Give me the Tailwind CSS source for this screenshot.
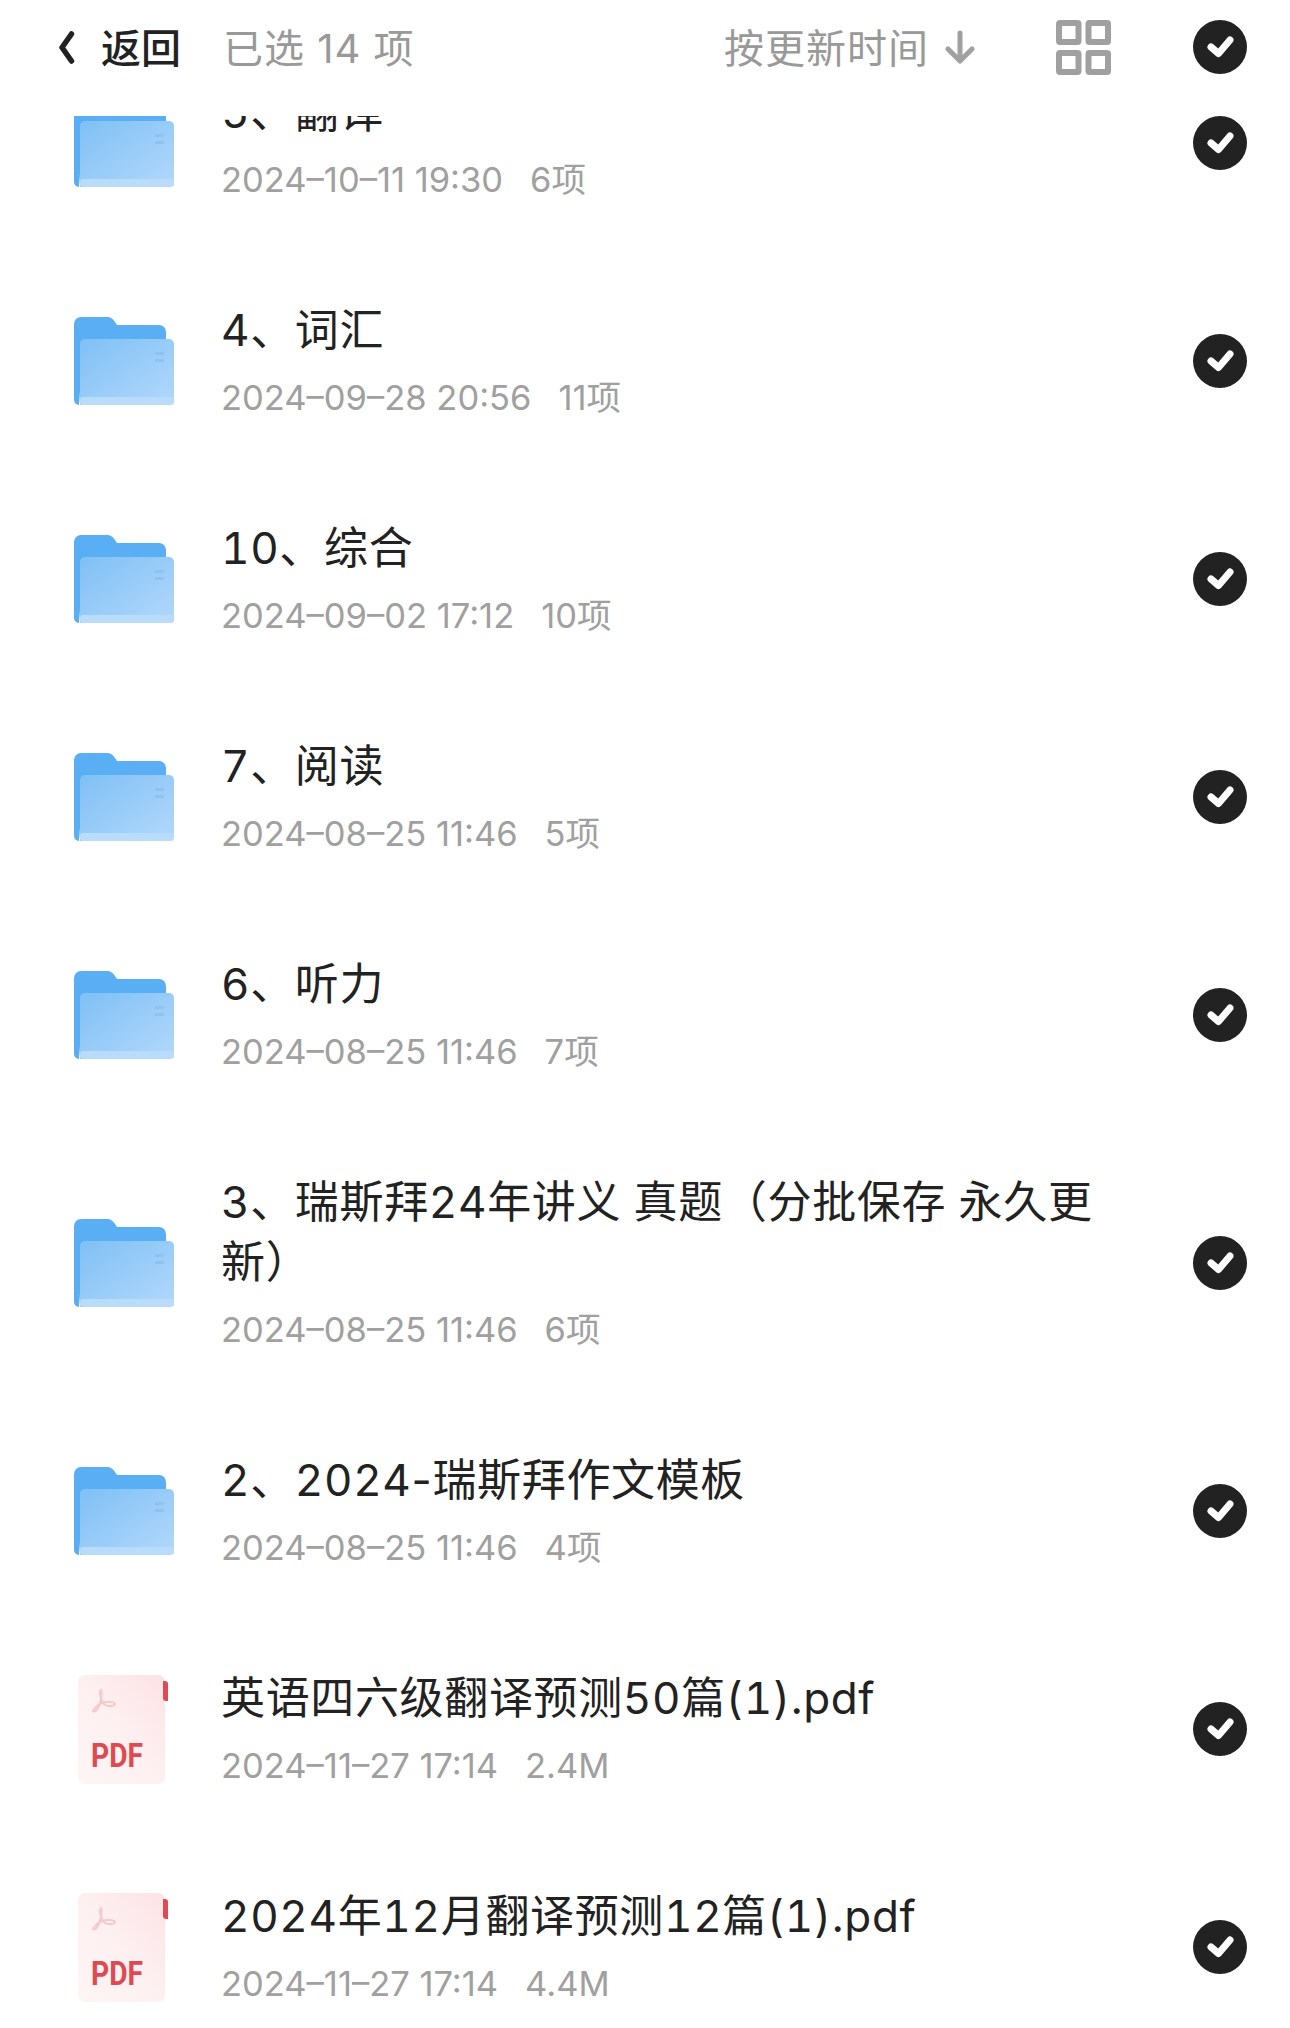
<!DOCTYPE html>
<html lang="zh-CN">
<head>
  <meta charset="UTF-8">
  <meta name="viewport" content="width=device-width, initial-scale=1.0">
  <title>已选 14 项</title>
  <script src="https://cdn.jsdelivr.net/npm/@tailwindcss/browser@4"></script>
</head>
<body class="bg-white">
  <!-- shared icons -->
  <svg class="absolute w-0 h-0">
    <defs>
      <linearGradient id="folderFront" x1="0" y1="0" x2="1" y2="1">
        <stop offset="0" stop-color="#7fc0f5"/>
        <stop offset="1" stop-color="#b3d8fb"/>
      </linearGradient>
      <symbol id="folder" viewBox="0 0 100 88">
        <path d="M0 7a7 7 0 0 1 7-7h25c5 0 7 2 9 5l2 3h42a7 7 0 0 1 7 7v60H6l-1 13a5 5 0 0 1-5-5z" fill="#5aaef3"/>
        <path d="M6 27a5 5 0 0 1 5-5h84a5 5 0 0 1 5 5v56a5 5 0 0 1-5 5H6z" fill="url(#folderFront)"/>
        <rect x="6" y="80" width="94" height="8" rx="3" fill="#b9dcfb"/>
        <rect x="81" y="35" width="9" height="3" fill="#8fc2ee"/>
        <rect x="81" y="42" width="9" height="3" fill="#8fc2ee"/>
      </symbol>
      <symbol id="check" viewBox="0 0 54 54">
        <circle cx="27" cy="27" r="27" fill="#222222"/>
        <path d="M18 27l7.500 6.500L37 20" fill="none" stroke="#ffffff" stroke-width="7" stroke-linecap="round" stroke-linejoin="round"/>
      </symbol>
      <linearGradient id="pdfPage" x1="1" y1="0" x2="0" y2="1">
        <stop offset="0" stop-color="#fde2e4"/>
        <stop offset="0.5" stop-color="#fdf0f1"/>
        <stop offset="1" stop-color="#fef5f5"/>
      </linearGradient>
    </defs>
  </svg>

  <div class="h-[2028px] overflow-hidden font-['Inter','Noto_Sans_CJK_SC',sans-serif]">
    <!-- Header -->
    <div class="relative z-10 h-[116px] pb-[22px] bg-white flex items-center pl-[58px] pr-[43px] text-[40px] leading-[48px]">
      <svg class="w-[17px] h-[33px]" viewBox="0 0 17 33"><path d="M13.500 3L4 16.500 13.500 30" fill="none" stroke="#222222" stroke-width="5.500" stroke-linecap="round" stroke-linejoin="round"/></svg>
      <span class="ml-[26px] mt-[4px] font-medium text-[#222222]">返回</span>
      <span class="ml-[42px] mt-[4px] tracking-[1px] text-[#999999]">已选 14 项</span>
      <span class="ml-auto mt-[4px] tracking-[1px] text-[#999999]">按更新时间</span>
      <svg class="ml-[15px] w-[32px] h-[34px]" viewBox="0 0 32 34"><path d="M16 3v27M4 19l12 12 12-12" fill="none" stroke="#a0a0a0" stroke-width="5" stroke-linecap="round" stroke-linejoin="round"/></svg>
      <svg class="ml-[80px] w-[55px] h-[55px]" viewBox="0 0 55 55" fill="none" stroke="#a0a0a0" stroke-width="6">
        <rect x="3" y="3" width="19.500" height="19" rx="1"/>
        <rect x="32.500" y="3" width="19.500" height="19" rx="1"/>
        <rect x="3" y="33" width="19.500" height="19" rx="1"/>
        <rect x="32.500" y="33" width="19.500" height="19" rx="1"/>
      </svg>
      <svg class="ml-[82px] w-[54px] h-[54px]"><use href="#check"/></svg>
    </div>

    <!-- File list -->
    <div class="-mt-[82px]">
      <div class="flex items-center pl-[74px] pr-[43px]">
        <svg class="w-[100px] h-[88px] shrink-0"><use href="#folder"/></svg>
        <div class="flex-1 ml-[47px] mr-[63px] pt-[48px] pb-[48px]">
          <div class="text-[44px] leading-[60px] tabular-nums tracking-[0.65px] text-[#222222]">5、翻译</div>
          <div class="mt-[14px] flex gap-[27px] text-[34.500px] leading-[48px] text-[#a0a0a0]"><span>2024–10–11 19:30</span><span>6项</span></div>
        </div>
        <svg class="w-[54px] h-[54px] shrink-0"><use href="#check"/></svg>
      </div>
      <div class="flex items-center pl-[74px] pr-[43px]">
        <svg class="w-[100px] h-[88px] shrink-0"><use href="#folder"/></svg>
        <div class="flex-1 ml-[47px] mr-[63px] pt-[48px] pb-[48px]">
          <div class="text-[44px] leading-[60px] tabular-nums tracking-[0.65px] text-[#222222]">4、词汇</div>
          <div class="mt-[14px] flex gap-[27px] text-[34.500px] leading-[48px] text-[#a0a0a0]"><span>2024–09–28 20:56</span><span>11项</span></div>
        </div>
        <svg class="w-[54px] h-[54px] shrink-0"><use href="#check"/></svg>
      </div>
      <div class="flex items-center pl-[74px] pr-[43px]">
        <svg class="w-[100px] h-[88px] shrink-0"><use href="#folder"/></svg>
        <div class="flex-1 ml-[47px] mr-[63px] pt-[48px] pb-[48px]">
          <div class="text-[44px] leading-[60px] tabular-nums tracking-[0.65px] text-[#222222]">10、综合</div>
          <div class="mt-[14px] flex gap-[27px] text-[34.500px] leading-[48px] text-[#a0a0a0]"><span>2024–09–02 17:12</span><span>10项</span></div>
        </div>
        <svg class="w-[54px] h-[54px] shrink-0"><use href="#check"/></svg>
      </div>
      <div class="flex items-center pl-[74px] pr-[43px]">
        <svg class="w-[100px] h-[88px] shrink-0"><use href="#folder"/></svg>
        <div class="flex-1 ml-[47px] mr-[63px] pt-[48px] pb-[48px]">
          <div class="text-[44px] leading-[60px] tabular-nums tracking-[0.65px] text-[#222222]">7、阅读</div>
          <div class="mt-[14px] flex gap-[27px] text-[34.500px] leading-[48px] text-[#a0a0a0]"><span>2024–08–25 11:46</span><span>5项</span></div>
        </div>
        <svg class="w-[54px] h-[54px] shrink-0"><use href="#check"/></svg>
      </div>
      <div class="flex items-center pl-[74px] pr-[43px]">
        <svg class="w-[100px] h-[88px] shrink-0"><use href="#folder"/></svg>
        <div class="flex-1 ml-[47px] mr-[63px] pt-[48px] pb-[48px]">
          <div class="text-[44px] leading-[60px] tabular-nums tracking-[0.65px] text-[#222222]">6、听力</div>
          <div class="mt-[14px] flex gap-[27px] text-[34.500px] leading-[48px] text-[#a0a0a0]"><span>2024–08–25 11:46</span><span>7项</span></div>
        </div>
        <svg class="w-[54px] h-[54px] shrink-0"><use href="#check"/></svg>
      </div>
      <div class="flex items-center pl-[74px] pr-[43px]">
        <svg class="w-[100px] h-[88px] shrink-0"><use href="#folder"/></svg>
        <div class="flex-1 ml-[47px] mr-[63px] pt-[48px] pb-[48px]">
          <div class="text-[44px] leading-[60px] tabular-nums tracking-[0.65px] text-[#222222]">3、瑞斯拜24年讲义 真题（分批保存 永久更新）</div>
          <div class="mt-[14px] flex gap-[27px] text-[34.500px] leading-[48px] text-[#a0a0a0]"><span>2024–08–25 11:46</span><span>6项</span></div>
        </div>
        <svg class="w-[54px] h-[54px] shrink-0"><use href="#check"/></svg>
      </div>
      <div class="flex items-center pl-[74px] pr-[43px]">
        <svg class="w-[100px] h-[88px] shrink-0"><use href="#folder"/></svg>
        <div class="flex-1 ml-[47px] mr-[63px] pt-[48px] pb-[48px]">
          <div class="text-[44px] leading-[60px] tabular-nums tracking-[0.65px] text-[#222222]">2、2024<span class="normal-nums">-</span>瑞斯拜作文模板</div>
          <div class="mt-[14px] flex gap-[27px] text-[34.500px] leading-[48px] text-[#a0a0a0]"><span>2024–08–25 11:46</span><span>4项</span></div>
        </div>
        <svg class="w-[54px] h-[54px] shrink-0"><use href="#check"/></svg>
      </div>
      <!-- PDF rows -->
      <div class="flex items-center pl-[78px] pr-[43px]">
        <svg class="w-[90px] h-[109px] shrink-0" viewBox="0 0 90 109">
          <rect x="0" y="0" width="87" height="109" rx="7" fill="url(#pdfPage)"/>
          <path d="M85 6h2a3 3 0 0 1 3 3v17h-2a3 3 0 0 1-3-3z" fill="#e0494f"/>
          <path d="M23 15c-3 2 1 13 4 15s10 1 10-1-8-3-13-1-9 7-9 8 3 1 5-3 5-14 3-18z" fill="none" stroke="#f6c9cb" stroke-width="2"/>
          <text x="13" y="92" font-family="Roboto" font-weight="700" font-size="33" fill="#de4a50" textLength="52" lengthAdjust="spacingAndGlyphs">PDF</text>
        </svg>
        <div class="flex-1 ml-[53px] mr-[63px] pt-[48px] pb-[48px]">
          <div class="text-[44px] leading-[60px] tabular-nums tracking-[0.65px] text-[#222222]">英语四六级翻译预测50篇(1).pdf</div>
          <div class="mt-[14px] flex gap-[27px] text-[34.500px] leading-[48px] text-[#a0a0a0]"><span>2024–11–27 17:14</span><span>2.4M</span></div>
        </div>
        <svg class="w-[54px] h-[54px] shrink-0"><use href="#check"/></svg>
      </div>
      <div class="flex items-center pl-[78px] pr-[43px]">
        <svg class="w-[90px] h-[109px] shrink-0" viewBox="0 0 90 109">
          <rect x="0" y="0" width="87" height="109" rx="7" fill="url(#pdfPage)"/>
          <path d="M85 6h2a3 3 0 0 1 3 3v17h-2a3 3 0 0 1-3-3z" fill="#e0494f"/>
          <path d="M23 15c-3 2 1 13 4 15s10 1 10-1-8-3-13-1-9 7-9 8 3 1 5-3 5-14 3-18z" fill="none" stroke="#f6c9cb" stroke-width="2"/>
          <text x="13" y="92" font-family="Roboto" font-weight="700" font-size="33" fill="#de4a50" textLength="52" lengthAdjust="spacingAndGlyphs">PDF</text>
        </svg>
        <div class="flex-1 ml-[53px] mr-[63px] pt-[48px] pb-[48px]">
          <div class="text-[44px] leading-[60px] tabular-nums tracking-[0.65px] text-[#222222]">2024年12月翻译预测12篇(1).pdf</div>
          <div class="mt-[14px] flex gap-[27px] text-[34.500px] leading-[48px] text-[#a0a0a0]"><span>2024–11–27 17:14</span><span>4.4M</span></div>
        </div>
        <svg class="w-[54px] h-[54px] shrink-0"><use href="#check"/></svg>
      </div>
    </div>
  </div>
</body>
</html>
